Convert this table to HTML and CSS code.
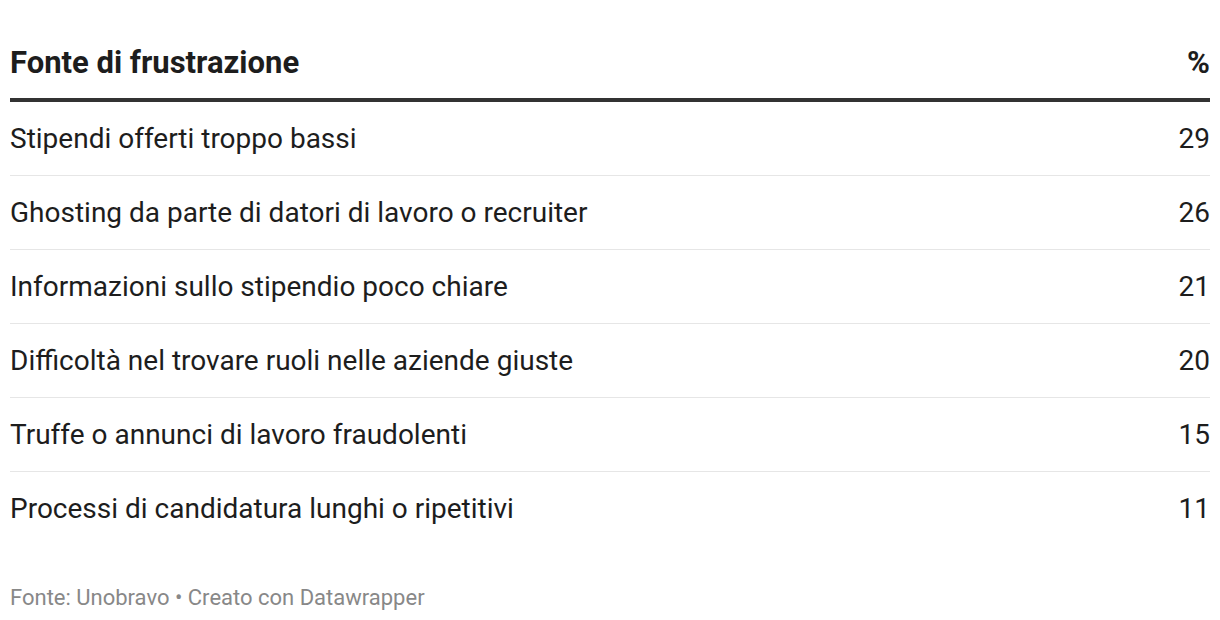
FILE: index.html
```html
<!DOCTYPE html>
<html lang="it">
<head>
<meta charset="utf-8">
<link rel="stylesheet" href="styles.css">
</head>
<body>
<div class="chart">
  <div class="head">
    <div class="label">Fonte di frustrazione</div>
    <div class="value">%</div>
  </div>
  <div class="row"><div class="label">Stipendi offerti troppo bassi</div><div class="value">29</div></div>
  <div class="row"><div class="label">Ghosting da parte di datori di lavoro o recruiter</div><div class="value">26</div></div>
  <div class="row"><div class="label">Informazioni sullo stipendio poco chiare</div><div class="value">21</div></div>
  <div class="row"><div class="label">Difficoltà nel trovare ruoli nelle aziende giuste</div><div class="value">20</div></div>
  <div class="row"><div class="label">Truffe o annunci di lavoro fraudolenti</div><div class="value">15</div></div>
  <div class="row last"><div class="label">Processi di candidatura lunghi o ripetitivi</div><div class="value">11</div></div>
  <div class="footer">Fonte: Unobravo • Creato con Datawrapper</div>
</div>
</body>
</html>
```
FILE: styles.css
```css
html, body {
  margin: 0;
  padding: 0;
  background: #fff;
}
body {
  font-family: Roboto, "Liberation Sans", sans-serif;
  color: #1d1d1d;
}
.chart {
  padding: 0 10px;
  display: flex;
  flex-direction: column;
}
.head {
  display: flex;
  justify-content: space-between;
  align-items: flex-end;
  height: 102px;
  box-sizing: border-box;
  padding-bottom: 18px;
  border-bottom: 4px solid #333;
  font-weight: 700;
  font-size: 31px;
  line-height: 34px;
}
.row {
  display: flex;
  justify-content: space-between;
  align-items: center;
  height: 74px;
  box-sizing: border-box;
  border-bottom: 1px solid #e6e6e6;
  font-size: 28px;
  line-height: 34px;
}
.row.last {
  border-bottom: none;
}
.footer {
  margin-top: 39px;
  font-size: 22px;
  line-height: 26px;
  color: #888;
}
```
